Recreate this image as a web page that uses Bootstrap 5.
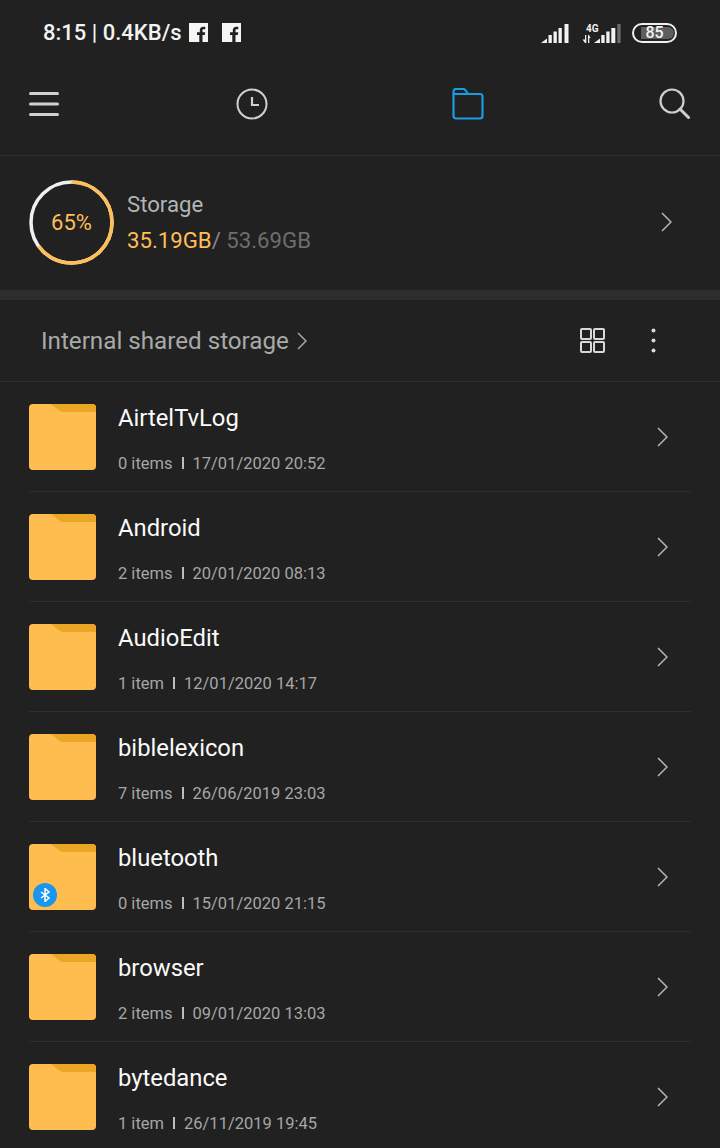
<!DOCTYPE html>
<html lang="en">
<head>
<meta charset="utf-8">
<title>Files</title>
<link rel="stylesheet" href="https://cdn.jsdelivr.net/npm/bootstrap@5.3.0/dist/css/bootstrap.min.css">
<style>
html,body{background:#212121;}
body{font-family:Roboto,"Liberation Sans",sans-serif;color:#fff;height:1148px;overflow:hidden;}
.stat-bar{height:65px;padding:0 43px 0 43px;}
.stat-text{font-size:22px;font-weight:500;color:#f2f2f2;white-space:nowrap;line-height:1;}
.stat-fb{width:19px;height:19px;display:block;}
.fb-first{margin-left:7px;}
.fb-second{margin-left:14px;}
.sig-a{margin-top:1px;}
.sig-b{margin-left:13px;margin-top:1px;}
.batt{width:45px;height:20px;border:2px solid #f0f0f0;border-radius:10px;position:relative;font-size:16px;font-weight:500;color:#f2f2f2;line-height:16px;text-align:center;margin-left:11px;}
.batt-fill{position:absolute;left:7px;top:2px;bottom:2px;right:1px;background:#5e5e5e;border-radius:0 6px 6px 0;}
.batt-num{position:relative;display:block;}
.tool-bar{height:91px;padding:0 30px 13px 29px;border-bottom:1px solid #2e2e2e;}
.tool-clock{margin-left:177px;}
.tool-folder{margin-left:184px;}
.tool-search{margin-left:auto;}
.stor-block{height:134px;padding:0 48px 2px 29px;}
.ring-wrap{width:85px;height:85px;position:relative;flex:none;}
.ring-label{position:absolute;inset:0;display:flex;align-items:center;justify-content:center;font-size:22px;color:#ffbe57;}
.stor-title{font-size:22.2px;color:#b4b4b4;line-height:28px;}
.stor-nums{font-size:22.2px;color:#6d6d6d;line-height:28px;margin-top:8px;}
.stor-used{color:#ffbe57;}
.stor-sep{color:#8a8a8a;}
.stor-info{margin-left:13px;}
.band{height:10px;background:#2d2d2d;}
.path-bar{height:82px;padding:0 64px 0 41px;border-bottom:1px solid #2e2e2e;}
.path-name{font-size:24.2px;color:#a9a9a9;line-height:1;margin-top:2px;}
.path-dots{margin-left:46px;}
.file-row{height:110px;margin-left:29px;margin-right:29px;border-bottom:1px solid #2e2e2e;padding-right:23px;}
.folder-box{position:relative;width:67px;height:66px;flex:none;margin-top:1px;}
.folder-box svg.fold{display:block;}
.bt-dot{position:absolute;left:4px;bottom:3px;width:24px;height:24px;border-radius:50%;background:#1a95f0;display:flex;align-items:center;justify-content:center;}
.file-info{margin-left:22px;padding-top:4px;}
.file-name{font-size:23.8px;line-height:28px;color:#fafafa;}
.file-sub{font-size:16.5px;line-height:20px;color:#a6a6a6;margin-top:22px;white-space:nowrap;}
.sub-bar{display:inline-block;width:2px;height:12px;background:#bdbdbd;margin:0 9px 0 9px;vertical-align:-0.5px;}
</style>
</head>
<body>
<div class="stat-bar d-flex align-items-center justify-content-between">
  <div class="d-flex align-items-center">
    <span class="stat-text">8:15 | 0.4KB/s</span>
    <svg class="stat-fb fb-first" viewBox="0 0 19 19"><rect width="19" height="19" fill="#f5f5f5"/><path d="M13.500 19v-7h2.300l.4-2.700h-2.700V7.600c0-.8.3-1.300 1.400-1.300h1.400V3.900c-.3 0-1.100-.1-2-.1-2.100 0-3.500 1.300-3.500 3.500v2H8V12h2.300v7z" fill="#212121"/></svg>
    <svg class="stat-fb fb-second" viewBox="0 0 19 19"><rect width="19" height="19" fill="#f5f5f5"/><path d="M13.500 19v-7h2.300l.4-2.700h-2.700V7.600c0-.8.3-1.300 1.400-1.300h1.400V3.900c-.3 0-1.100-.1-2-.1-2.100 0-3.500 1.300-3.500 3.500v2H8V12h2.300v7z" fill="#212121"/></svg>
  </div>
  <div class="d-flex align-items-center">
    <svg class="sig-a" width="28" height="20" viewBox="0 0 28 20"><g fill="#f2f2f2"><path d="M0 20l6-4.500V20z"/><rect x="7.500" y="12" width="3.300" height="8"/><rect x="12.500" y="8.500" width="3.300" height="11.500"/><rect x="17.500" y="5" width="3.300" height="15"/><rect x="23.500" y="1" width="4" height="19"/></g></svg>
    <svg class="sig-b" width="39" height="20" viewBox="0 0 39 20"><text x="4" y="9" font-family="Roboto" font-weight="700" font-size="10" fill="#f2f2f2">4G</text><g fill="#f2f2f2"><rect x="3" y="12" width="1.300" height="8"/><path d="M0.500 16.500h3.500L3 20z"/><rect x="6" y="12" width="1.300" height="8"/><path d="M6 12l2.800 3H6z"/><path d="M12 20l6-4.500V20z"/><rect x="19.300" y="12" width="3.300" height="8"/><rect x="24.300" y="8.500" width="3.300" height="11.500"/><rect x="29.300" y="5" width="4" height="15"/></g><rect x="35.300" y="1" width="3.300" height="19" fill="#6b6b6b"/></svg>
    <div class="batt"><span class="batt-fill"></span><span class="batt-num">85</span></div>
  </div>
</div>

<div class="tool-bar d-flex align-items-center">
  <svg width="30" height="28" viewBox="0 0 30 28"><g stroke="#d0d0d0" stroke-width="3" stroke-linecap="round"><path d="M1.500 3.500h27M1.500 14h27M1.500 24.500h27"/></g></svg>
  <svg class="tool-clock" width="32" height="32" viewBox="0 0 32 32"><circle cx="16" cy="16" r="14.500" fill="none" stroke="#d0d0d0" stroke-width="2"/><path d="M16 9v8h7" fill="none" stroke="#d0d0d0" stroke-width="2.200"/></svg>
  <svg class="tool-folder" width="32" height="32" viewBox="0 0 32 32"><path d="M1.500 3.500a2.500 2.500 0 0 1 2.500-2.500h7a3 3 0 0 1 2.400 1.200L16 6H28a2.500 2.500 0 0 1 2.500 2.500V28a2.500 2.500 0 0 1-2.500 2.500H4a2.500 2.500 0 0 1-2.500-2.500z M1.500 6H16" fill="none" stroke="#1c9ce0" stroke-width="2.200" stroke-linejoin="round"/></svg>
  <svg class="tool-search" width="31" height="31" viewBox="0 0 31 31"><circle cx="13" cy="13" r="11.500" fill="none" stroke="#cfcfcf" stroke-width="2.200"/><path d="M21 21l8.500 8.500" stroke="#cfcfcf" stroke-width="3" stroke-linecap="round"/></svg>
</div>

<div class="stor-block d-flex align-items-center">
  <div class="ring-wrap">
    <svg width="85" height="85" viewBox="0 0 85 85"><circle cx="42.500" cy="42.500" r="40.500" fill="none" stroke="#f0f0f0" stroke-width="3.500"/><circle cx="42.500" cy="42.500" r="40.500" fill="none" stroke="#ffbe57" stroke-width="3.500" pathLength="100" stroke-dasharray="65 35" transform="rotate(-90 42.500 42.500)"/></svg>
    <span class="ring-label">65%</span>
  </div>
  <div class="stor-info flex-grow-1">
    <div class="stor-title">Storage</div>
    <div class="stor-nums"><span class="stor-used">35.19GB</span><span class="stor-sep">/</span> 53.69GB</div>
  </div>
  <svg width="11" height="20" viewBox="0 0 11 20"><path d="M1 1l9 9-9 9" fill="none" stroke="#b5b5b5" stroke-width="1.500"/></svg>
</div>

<div class="band"></div>

<div class="path-bar d-flex align-items-center">
  <span class="path-name">Internal shared storage</span>
  <svg class="ms-2 flex-shrink-0" width="10" height="18" viewBox="0 0 10 18"><path d="M1 1l8 8-8 8" fill="none" stroke="#a9a9a9" stroke-width="1.500"/></svg>
  <svg class="ms-auto" width="25" height="25" viewBox="0 0 25 25"><g fill="none" stroke="#d8d8d8" stroke-width="2"><rect x="1" y="1" width="10" height="10" rx="1"/><rect x="14" y="1" width="10" height="10" rx="1"/><rect x="1" y="14" width="10" height="10" rx="1"/><rect x="14" y="14" width="10" height="10" rx="1"/></g></svg>
  <svg class="path-dots" width="5" height="25" viewBox="0 0 5 25"><g fill="#d8d8d8"><circle cx="2.500" cy="2.500" r="2"/><circle cx="2.500" cy="12.500" r="2"/><circle cx="2.500" cy="22.500" r="2"/></g></svg>
</div>

<div id="rows"></div>
<script>
const rows=[["AirtelTvLog","0 items","17/01/2020 20:52"],["Android","2 items","20/01/2020 08:13"],["AudioEdit","1 item","12/01/2020 14:17"],["biblelexicon","7 items","26/06/2019 23:03"],["bluetooth","0 items","15/01/2020 21:15",1],["browser","2 items","09/01/2020 13:03"],["bytedance","1 item","26/11/2019 19:45"]];
document.getElementById('rows').innerHTML=rows.map(r=>`
<div class="file-row d-flex align-items-center">
  <div class="folder-box">
    <svg class="fold" width="67" height="66" viewBox="0 0 67 66"><rect width="67" height="66" rx="4" fill="#ffbd4f"/><path d="M22 0h41a4 4 0 0 1 4 4v4H34a6 6 0 0 1-3.500-1.200z" fill="#eca626"/></svg>
    ${r[3]?`<span class="bt-dot"><svg width="10" height="14" viewBox="0 0 10 14"><path d="M1 4l8 6-4 3.500v-13l4 3.500-8 6" fill="none" stroke="#fff" stroke-width="1.500"/></svg></span>`:''}
  </div>
  <div class="file-info flex-grow-1">
    <div class="file-name">${r[0]}</div>
    <div class="file-sub">${r[1]}<span class="sub-bar"></span>${r[2]}</div>
  </div>
  <svg width="11" height="20" viewBox="0 0 11 20"><path d="M1 1l9 9-9 9" fill="none" stroke="#b5b5b5" stroke-width="1.500"/></svg>
</div>`).join('');
</script>
<script src="https://cdn.jsdelivr.net/npm/bootstrap@5.3.0/dist/js/bootstrap.bundle.min.js"></script>
</body>
</html>
